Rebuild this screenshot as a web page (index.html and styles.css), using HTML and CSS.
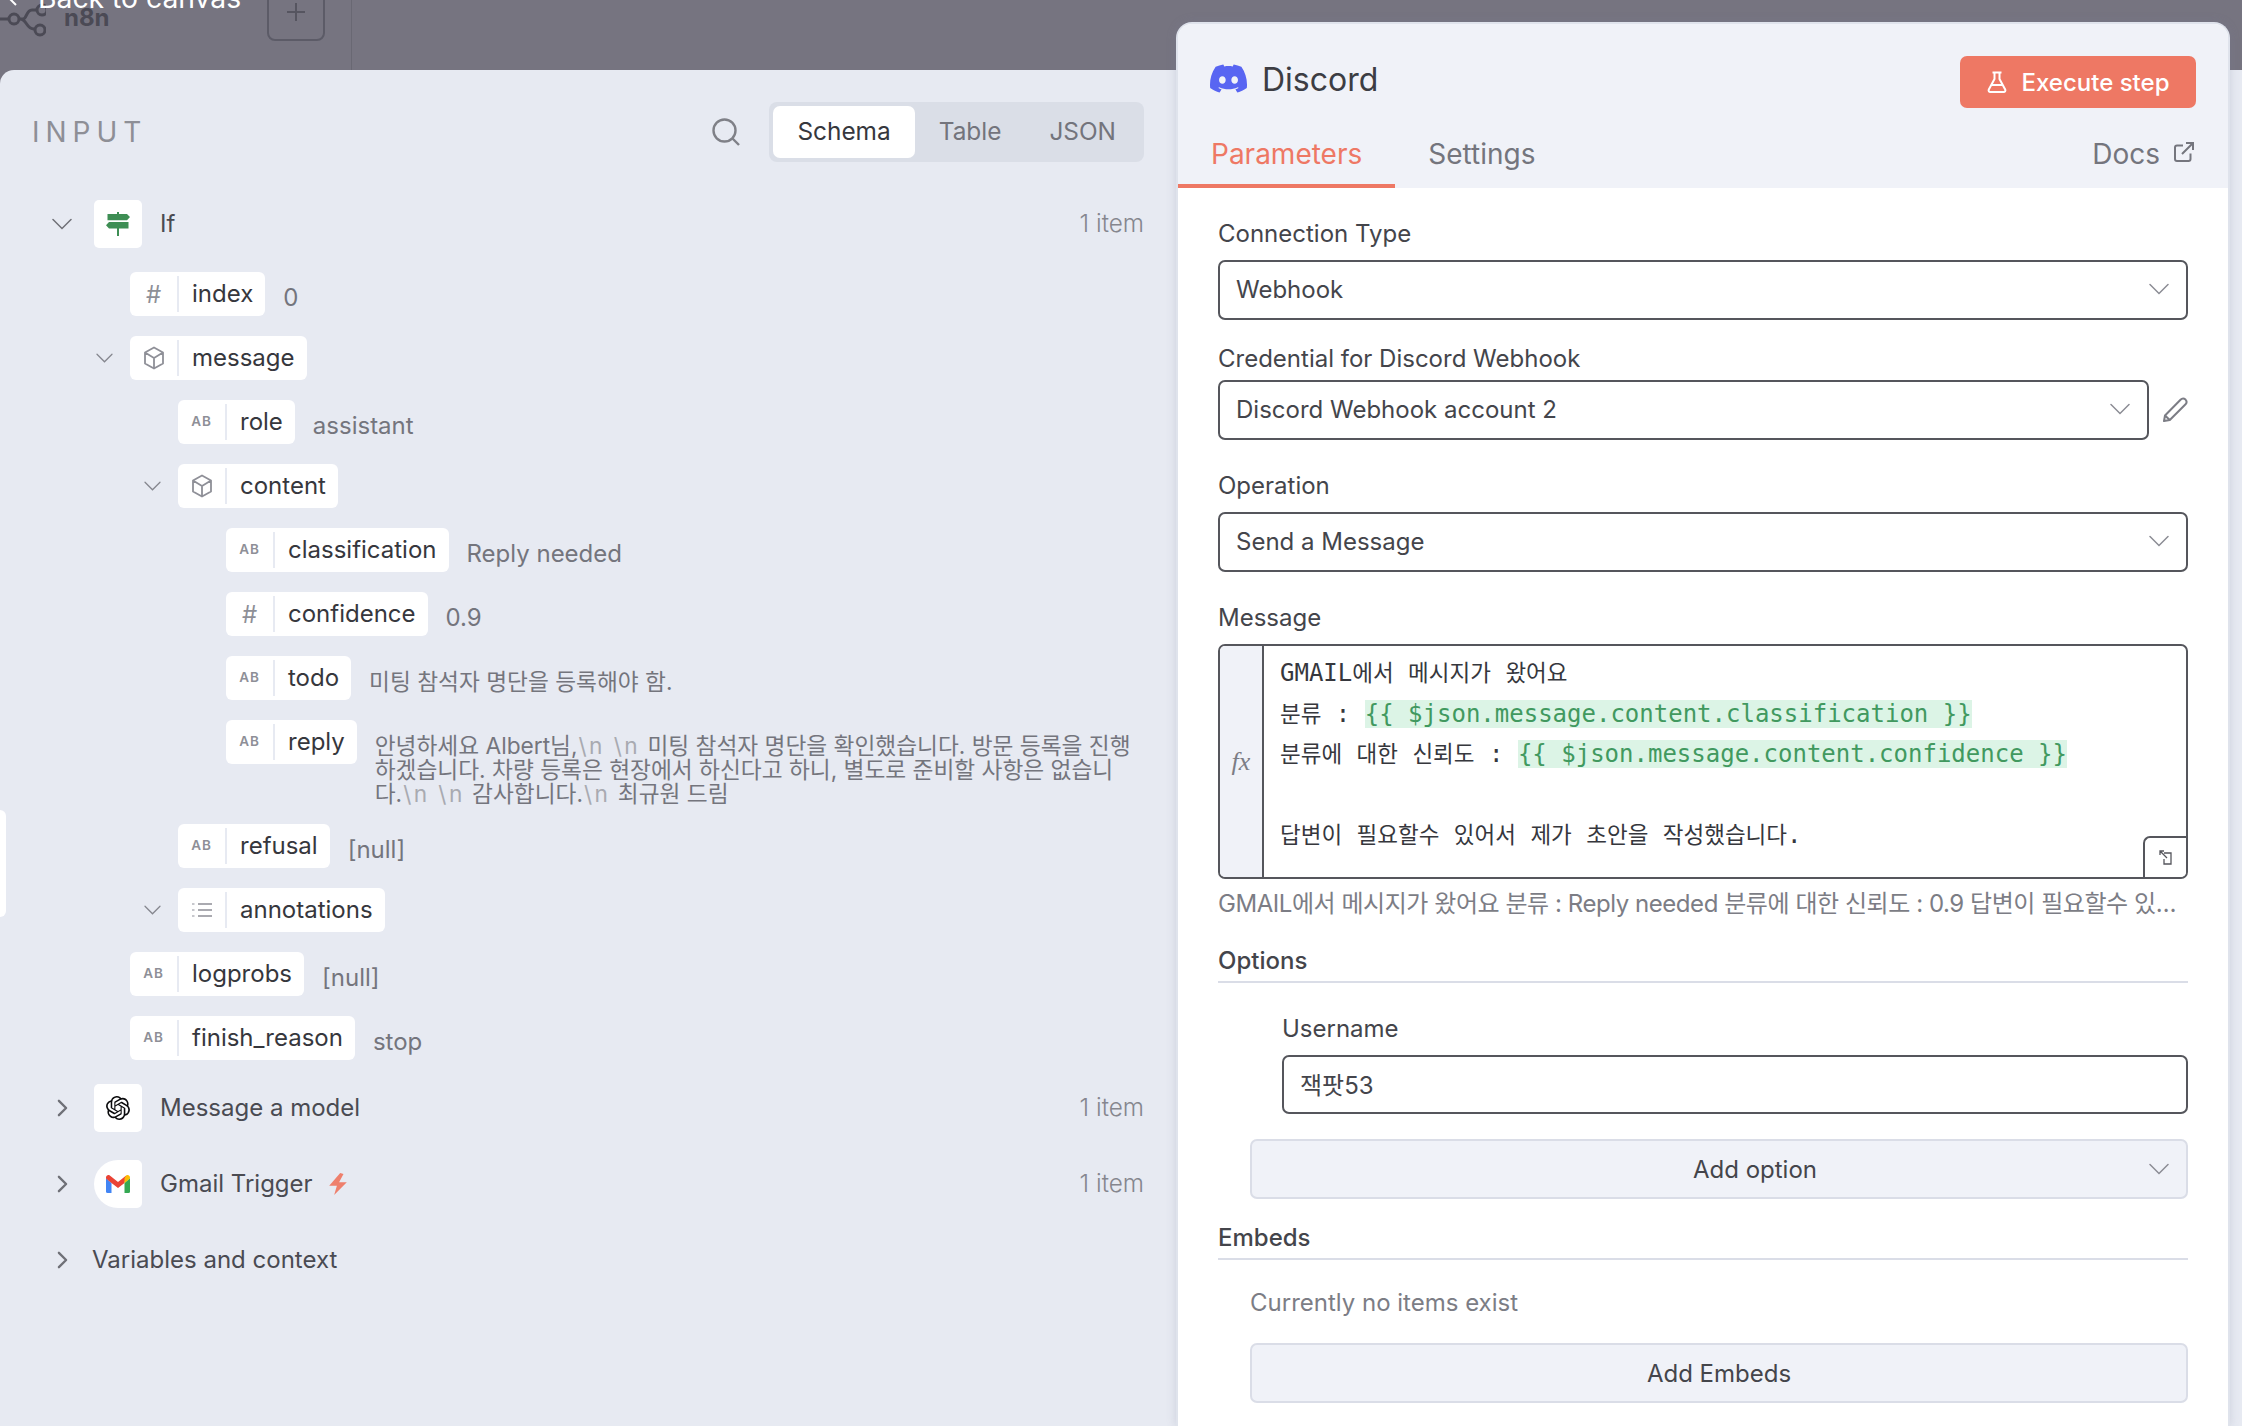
FILE: index.html
```html
<!DOCTYPE html>
<html lang="ko">
<head>
<meta charset="utf-8">
<title>Discord node</title>
<link rel="stylesheet" href="styles.css">
</head>
<body>
<svg class="defs" aria-hidden="true">
  <symbol id="down" viewBox="0 0 20 12"><path d="M1 1.5 10 10.5 19 1.5" fill="none" stroke="currentColor" stroke-width="1.5" stroke-linecap="round"/></symbol>
  <symbol id="right" viewBox="0 0 12 20"><path d="M2 2 10 10 2 18" fill="none" stroke="currentColor" stroke-width="2.6" stroke-linecap="round" stroke-linejoin="round"/></symbol>
  <symbol id="cube" viewBox="0 0 20 24"><path d="M10 1.5 19 6.5V17.5L10 22.5 1 17.5V6.5ZM1 6.5 10 12 19 6.5M10 12V22.5" fill="none" stroke="currentColor" stroke-width="1.8" stroke-linejoin="round"/></symbol>
</svg>
<div class="page">
  <header class="topbar">
    <svg class="n8n-logo" viewBox="0 0 46 40" aria-hidden="true">
      <g fill="none" stroke="#4b4a55" stroke-width="3"><path d="M-6 19H9M19 19H23C27 19 26 10 32 10H36M20 19C27 19 26 29 34 29"/><circle cx="14" cy="19" r="5"/><circle cx="40" cy="30" r="5"/><circle cx="42" cy="10" r="5"/></g>
    </svg>
    <span class="n8n-name">n8n</span>
    <span class="add-btn"><svg viewBox="0 0 18 18" class="add-ico"><path d="M9 0V18M0 9H18" stroke="#565560" stroke-width="2"/></svg></span>
    <span class="top-div"></span>
    <a class="back"><svg viewBox="0 0 10 16" class="back-ico"><path d="M8 1 1 8 8 15" fill="none" stroke="#fff" stroke-width="2"/></svg>Back to canvas</a>
  </header>

  <section class="input-panel">
    <div class="input-col">
      <div class="input-head">
        <span class="input-title">INPUT</span>
        <svg class="search" viewBox="0 0 28 28"><circle cx="12.5" cy="12.5" r="11" fill="none" stroke="#7f8087" stroke-width="2.4"/><path d="M20.5 20.5 27 27" stroke="#7f8087" stroke-width="2.4"/></svg>
        <div class="switch">
          <span class="sw on">Schema</span><span class="sw">Table</span><span class="sw">JSON</span>
        </div>
      </div>

      <div class="tree">
        <div class="node">
          <span class="node-caret"><svg class="c-down-big"><use href="#down"/></svg></span>
          <span class="node-ico">
            <svg class="sign" viewBox="0 0 24 24"><path fill="#3e8e54" d="M11 0h2v2h8l3 3-3 3.200H1.500V2H11ZM3 10h19.500v6.500H13V24h-2v-7.500H3l-3-3.200Z"/></svg>
          </span>
          <span class="node-name">If</span>
          <span class="count">1 item</span>
        </div>

        <div class="row d1"><span class="pill"><span class="pi hash">#</span><span class="pl">index</span></span><span class="val">0</span></div>
        <div class="row d1"><span class="caret"><svg class="c-down"><use href="#down"/></svg></span><span class="pill"><span class="pi"><svg class="cube"><use href="#cube"/></svg></span><span class="pl">message</span></span></div>
        <div class="row d2"><span class="pill"><span class="pi ab">AB</span><span class="pl">role</span></span><span class="val">assistant</span></div>
        <div class="row d2"><span class="caret"><svg class="c-down"><use href="#down"/></svg></span><span class="pill"><span class="pi"><svg class="cube"><use href="#cube"/></svg></span><span class="pl">content</span></span></div>
        <div class="row d3"><span class="pill"><span class="pi ab">AB</span><span class="pl">classification</span></span><span class="val">Reply needed</span></div>
        <div class="row d3"><span class="pill"><span class="pi hash">#</span><span class="pl">confidence</span></span><span class="val">0.9</span></div>
        <div class="row d3"><span class="pill"><span class="pi ab">AB</span><span class="pl">todo</span></span><span class="val ko-val">미팅 참석자 명단을 등록해야 함.</span></div>
        <div class="row d3 multi"><span class="pill"><span class="pi ab">AB</span><span class="pl">reply</span></span><span class="val ko-long">안녕하세요 Albert님,<i>\n \n</i> 미팅 참석자 명단을 확인했습니다. 방문 등록을 진행<br>하겠습니다. 차량 등록은 현장에서 하신다고 하니, 별도로 준비할 사항은 없습니<br>다.<i>\n \n</i> 감사합니다.<i>\n</i> 최규원 드림</span></div>
        <div class="row d2"><span class="pill"><span class="pi ab">AB</span><span class="pl">refusal</span></span><span class="val">[null]</span></div>
        <div class="row d2"><span class="caret"><svg class="c-down"><use href="#down"/></svg></span><span class="pill"><span class="pi"><svg class="list" viewBox="0 0 20 16"><path d="M6 2H20M6 8H20M6 14H20" stroke="#8e8f97" stroke-width="1.600"/><path d="M0 2H2.500M0 8H2.500M0 14H2.500" stroke="#b5b6bd" stroke-width="1.600"/></svg></span><span class="pl">annotations</span></span></div>
        <div class="row d1"><span class="pill"><span class="pi ab">AB</span><span class="pl">logprobs</span></span><span class="val">[null]</span></div>
        <div class="row d1"><span class="pill"><span class="pi ab">AB</span><span class="pl">finish_reason</span></span><span class="val">stop</span></div>

        <div class="node node-next">
          <span class="node-caret"><svg class="c-right"><use href="#right"/></svg></span>
          <span class="node-ico">
            <svg class="openai" viewBox="0 0 24 24"><path fill="#0b0b0d" d="M22.2819 9.8211a5.9847 5.9847 0 0 0-.5157-4.9108 6.0462 6.0462 0 0 0-6.5098-2.9A6.0651 6.0651 0 0 0 4.9807 4.1818a5.9847 5.9847 0 0 0-3.9977 2.9 6.0462 6.0462 0 0 0 .7427 7.0966 5.98 5.98 0 0 0 .511 4.9107 6.051 6.051 0 0 0 6.5146 2.9001A5.9847 5.9847 0 0 0 13.2599 24a6.0557 6.0557 0 0 0 5.7718-4.2058 5.9894 5.9894 0 0 0 3.9977-2.9001 6.0557 6.0557 0 0 0-.7475-7.0729zm-9.022 12.6081a4.4755 4.4755 0 0 1-2.8764-1.0408l.1419-.0804 4.7783-2.7582a.7948.7948 0 0 0 .3927-.6813v-6.7369l2.02 1.1686a.071.071 0 0 1 .038.052v5.5826a4.504 4.504 0 0 1-4.4945 4.4944zm-9.6607-4.1254a4.4708 4.4708 0 0 1-.5346-3.0137l.142.0852 4.783 2.7582a.7712.7712 0 0 0 .7806 0l5.8428-3.3685v2.3324a.0804.0804 0 0 1-.0332.0615L9.74 19.9502a4.4992 4.4992 0 0 1-6.1408-1.6464zM2.3408 7.8956a4.485 4.485 0 0 1 2.3655-1.9728V11.6a.7664.7664 0 0 0 .3879.6765l5.8144 3.3543-2.0201 1.1685a.0757.0757 0 0 1-.071 0l-4.8303-2.7865A4.504 4.504 0 0 1 2.3408 7.872zm16.5963 3.8558L13.1038 8.364 15.1192 7.2a.0757.0757 0 0 1 .071 0l4.8303 2.7913a4.4944 4.4944 0 0 1-.6765 8.1042v-5.6772a.79.79 0 0 0-.407-.667zm2.0107-3.0231l-.142-.0852-4.7735-2.7818a.7759.7759 0 0 0-.7854 0L9.409 9.2297V6.8974a.0662.0662 0 0 1 .0284-.0615l4.8303-2.7866a4.4992 4.4992 0 0 1 6.6802 4.66zM8.3065 12.863l-2.02-1.1638a.0804.0804 0 0 1-.038-.0567V6.0742a4.4992 4.4992 0 0 1 7.3757-3.4537l-.142.0805L8.704 5.459a.7948.7948 0 0 0-.3927.6813zm1.0976-2.3654l2.602-1.4998 2.6069 1.4998v2.9994l-2.5974 1.4997-2.6067-1.4997Z"/></svg>
          </span>
          <span class="node-name">Message a model</span>
          <span class="count">1 item</span>
        </div>
        <div class="node node-gmail">
          <span class="node-caret"><svg class="c-right"><use href="#right"/></svg></span>
          <span class="node-ico ico-gmail">
            <svg class="gmail" viewBox="0 0 24 18"><path fill="#4285f4" d="M0 3v13.500A1.500 1.500 0 0 0 1.500 18H5.500V8Z"/><path fill="#34a853" d="M24 3v13.500a1.500 1.500 0 0 1-1.500 1.500H18.500V8Z"/><path fill="#ea4335" d="M0 2.500C0 .5 2.300-.6 3.800.6L12 7 20.200.6 18.500 8 12 13 5.500 8 0 3.500Z"/><path fill="#fbbc04" d="M18.500 3.200 20.200.6C21.700-.6 24 .5 24 2.500V3.500L18.500 8Z"/></svg>
          </span>
          <span class="node-name">Gmail Trigger</span>
          <svg class="bolt" viewBox="0 0 18 20"><path fill="#ee7f6c" d="M11 0 1 11.500H8L5.500 20 17 8.500H10L14 1Z"/></svg>
          <span class="count">1 item</span>
        </div>
        <div class="node node-vars">
          <span class="node-caret"><svg class="c-right"><use href="#right"/></svg></span>
          <span class="node-name vars">Variables and context</span>
        </div>
      </div>
    </div>
    <span class="handle"></span>
  </section>

  <section class="ndv">
    <div class="ndv-head">
      <div class="title-row">
        <svg class="discord" viewBox="0 0 24 24"><path fill="#5865f2" d="M20.317 4.3698a19.7913 19.7913 0 00-4.8851-1.5152.0741.0741 0 00-.0785.0371c-.211.3753-.4447.8648-.6083 1.2495-1.8447-.2762-3.68-.2762-5.4868 0-.1636-.3933-.4058-.8742-.6177-1.2495a.077.077 0 00-.0785-.037 19.7363 19.7363 0 00-4.8852 1.515.0699.0699 0 00-.0321.0277C.5334 9.0458-.319 13.5799.0992 18.0578a.0824.0824 0 00.0312.0561c2.0528 1.5076 4.0413 2.4228 5.9929 3.0294a.0777.0777 0 00.0842-.0276c.4616-.6304.8731-1.2952 1.226-1.9942a.076.076 0 00-.0416-.1057c-.6528-.2476-1.2743-.5495-1.8722-.8923a.077.077 0 01-.0076-.1277c.1258-.0943.2517-.1923.3718-.2914a.0743.0743 0 01.0776-.0105c3.9278 1.7933 8.18 1.7933 12.0614 0a.0739.0739 0 01.0785.0095c.1202.099.246.1981.3728.2924a.077.077 0 01-.0066.1276 12.2986 12.2986 0 01-1.873.8914.0766.0766 0 00-.0407.1067c.3604.698.7719 1.3628 1.225 1.9932a.076.076 0 00.0842.0286c1.961-.6067 3.9495-1.5219 6.0023-3.0294a.077.077 0 00.0313-.0552c.5004-5.177-.8382-9.6739-3.5485-13.6604a.061.061 0 00-.0312-.0286zM8.02 15.3312c-1.1825 0-2.1569-1.0857-2.1569-2.419 0-1.3332.9555-2.4189 2.157-2.4189 1.2108 0 2.1757 1.0952 2.1568 2.419 0 1.3332-.9555 2.4189-2.1569 2.4189zm7.9748 0c-1.1825 0-2.1569-1.0857-2.1569-2.419 0-1.3332.9554-2.4189 2.1569-2.4189 1.2108 0 2.1757 1.0952 2.1568 2.419 0 1.3332-.946 2.4189-2.1568 2.4189Z"/></svg>
        <span class="title">Discord</span>
        <button class="exec"><svg class="flask" viewBox="0 0 20 22"><path d="M5.500 1.500H14.500M7.500 1.500V8L1.800 18.500C1.200 19.700 2 21 3.300 21H16.700C18 21 18.800 19.700 18.200 18.500L12.500 8V1.500M4.500 14H15.500" fill="none" stroke="#fff" stroke-width="2" stroke-linejoin="round"/></svg>Execute step</button>
      </div>
      <div class="tabs">
        <span class="tab active">Parameters</span>
        <span class="tab">Settings</span>
        <span class="docs">Docs<svg class="ext" viewBox="0 0 20 20"><path d="M9 3.500H3C1.800 3.500 1 4.300 1 5.500V17C1 18.200 1.800 19 3 19H14.500C15.700 19 16.500 18.200 16.500 17V11.500M8 12 18.500 1.500M12 1H19V8" fill="none" stroke="#75767e" stroke-width="2"/></svg></span>
      </div>
    </div>

    <div class="form">
      <div class="field">
        <label class="lbl">Connection Type</label>
        <div class="select"><span>Webhook</span><svg class="sel-chev"><use href="#down"/></svg></div>
      </div>
      <div class="field f-cred">
        <label class="lbl">Credential for Discord Webhook</label>
        <div class="cred-row">
          <div class="select"><span>Discord Webhook account 2</span><svg class="sel-chev"><use href="#down"/></svg></div>
          <svg class="pencil" viewBox="0 0 26 26"><path d="M2 24 3 18.500 18.500 2.800C20 1.300 22 1.300 23.500 2.600 24.800 4 24.800 6 23.300 7.500L7.800 23ZM3 18.500 7.800 23" fill="none" stroke="#7c7d85" stroke-width="2" stroke-linejoin="round"/></svg>
        </div>
      </div>
      <div class="field">
        <label class="lbl">Operation</label>
        <div class="select"><span>Send a Message</span><svg class="sel-chev"><use href="#down"/></svg></div>
      </div>
      <div class="field">
        <label class="lbl">Message</label>
        <div class="editor">
          <div class="fx">fx</div>
          <div class="code">
            <div class="ln">GMAIL<span class="ko">에서</span> <span class="ko">메시지가</span> <span class="ko">왔어요</span></div>
            <div class="ln"><span class="ko">분류</span> : <span class="expr">{{ $json.message.content.classification }}</span></div>
            <div class="ln"><span class="ko">분류에</span> <span class="ko">대한</span> <span class="ko">신뢰도</span> : <span class="expr">{{ $json.message.content.confidence }}</span></div>
            <div class="ln">&nbsp;</div>
            <div class="ln"><span class="ko">답변이</span> <span class="ko">필요할수</span> <span class="ko">있어서</span> <span class="ko">제가</span> <span class="ko">초안을</span> <span class="ko">작성했습니다</span>.</div>
          </div>
          <span class="resize"><svg class="resize-ico" viewBox="0 0 14 16"><path d="M1 5V1H5M1 1 8 8M5 3H12V14H5V9" fill="none" stroke="#55565c" stroke-width="1.300"/></svg></span>
        </div>
        <div class="preview">GMAIL에서 메시지가 왔어요 분류 : Reply needed 분류에 대한 신뢰도 : 0.9 답변이 필요할수 있어서 제가 초안을 작성했습니다.</div>
      </div>

      <div class="sect sect-options">Options</div>
      <div class="username">
        <label class="lbl">Username</label>
        <div class="select input"><span>잭팟53</span></div>
      </div>
      <div class="soft-btn add-option">Add option<svg class="sel-chev soft-chev"><use href="#down"/></svg></div>

      <div class="sect sect-embeds">Embeds</div>
      <div class="none">Currently no items exist</div>
      <div class="soft-btn">Add Embeds</div>
    </div>
  </section>
</div>
</body>
</html>
```
FILE: styles.css
```css
* { box-sizing: border-box; }
html, body { margin: 0; height: 100%; overflow: hidden; }
body { font-family: Inter, "Noto Sans CJK KR", sans-serif; color: #3c3d43; background: #e7eaf2; }
.defs { display: none; }

.page {
  display: grid;
  width: 2242px;
  height: 1426px;
  grid-template-columns: 1176px 1fr;
  grid-template-rows: 70px 1fr;
  background: #767480;
}

/* top bar */
.topbar {
  grid-column: 1 / 3;
  grid-row: 1;
  position: relative;
  display: flex;
  align-items: flex-start;
  height: 70px;
  overflow: hidden;
}
.n8n-logo { width: 46px; height: 40px; flex: none; }
.n8n-name { margin: 3px 0 0 18px; width: 203px; font-size: 24px; line-height: 29px; font-weight: 700; color: #4b4a55; }
.add-btn {
  display: flex; align-items: center; justify-content: center;
  width: 58px; height: 60px; margin-top: -19px;
  border: 2px solid #5c5b67; border-radius: 8px;
}
.add-ico { width: 18px; height: 18px; margin-top: 2px; }
.top-div { width: 1px; height: 70px; margin-left: 26px; background: #696873; }
.back {
  position: absolute; left: 8px; top: -20px;
  display: flex; align-items: center; gap: 20px;
  font-size: 28.300px; line-height: 36px; color: #fff;
}
.back-ico { width: 10px; height: 16px; }

/* input panel */
.input-panel {
  grid-column: 1 / 3;
  grid-row: 2;
  position: relative;
  background: #e7eaf2;
  border-top-left-radius: 14px;
}
.input-col { width: 1144px; }
.input-head {
  display: flex;
  align-items: center;
  margin: 32px 0 0 32px;
}
.input-title {
  font-size: 28px;
  font-weight: 400;
  letter-spacing: 6px;
  color: #8e8f96;
  line-height: 60px;
}
.search { width: 28px; height: 28px; margin: 0 29px 0 auto; }
.switch {
  display: flex;
  height: 60px;
  padding: 4px;
  background: #dadee7;
  border-radius: 8px;
}
.sw {
  display: flex; align-items: center;
  padding: 0 24px 2px;
  font-size: 24.400px;
  color: #73747c;
  border-radius: 7px;
}
.sw.on { background: #fff; color: #36373d; }

.tree { margin-top: 38px; }
.node {
  display: flex;
  align-items: center;
  height: 48px;
  padding-left: 41px;
  font-size: 24px;
}
.node-next { margin-top: 24px; }
.node-gmail { margin-top: 28px; }
.node-vars { margin-top: 28px; }
.node-caret {
  display: flex; align-items: center; justify-content: center;
  flex: none;
  width: 42px;
  margin-right: 11px;
  color: #6f7077;
}
.c-down-big { width: 20px; height: 12px; color: #6f7077; }
.c-right { width: 11px; height: 18px; }
.node-ico {
  display: flex; align-items: center; justify-content: center;
  flex: none;
  width: 48px; height: 48px;
  background: #fff;
  border-radius: 5px;
}
.ico-gmail { border-radius: 24px 5px 5px 24px; }
.sign { width: 24px; height: 24px; }
.openai { width: 24px; height: 24px; }
.gmail { width: 24px; height: 18px; }
.node-name { margin-left: 18px; padding-bottom: 2px; color: #4a4b52; }
.vars { margin-left: -2px; }
.bolt { width: 20px; height: 22px; margin-left: 15px; }
.count { margin-left: auto; padding-bottom: 2px; font-size: 24.300px; font-weight: 300; color: #85868e; }

.row {
  position: relative;
  display: flex;
  align-items: center;
  margin-top: 20px;
  height: 44px;
}
.node + .row { margin-top: 24px; }
.d1 { padding-left: 130px; }
.d2 { padding-left: 178px; }
.d3 { padding-left: 226px; }
.multi { height: 84px; align-items: flex-start; }
.caret {
  display: flex; align-items: center;
  width: 34px; height: 40px;
  margin-left: -34px;
  color: #85868e;
}
.c-down { width: 17px; height: 10px; }
.pill {
  display: flex;
  align-items: center;
  height: 44px;
  background: #fff;
  border-radius: 6px;
  font-size: 24px;
  color: #36373d;
  flex: none;
}
.pi {
  display: flex; align-items: center; justify-content: center;
  width: 49px; height: 36px;
  border-right: 2px solid #e7eaf2;
  color: #8e8f97;
}
.hash { font-size: 24px; font-weight: 400; }
.ab { font-size: 13.500px; font-weight: 600; letter-spacing: 1px; padding-bottom: 3px; }
.cube { width: 20px; height: 24px; }
.list { width: 20px; height: 16px; }
.pl { padding: 0 12px 1px 13px; line-height: 43px; }
.val {
  margin-left: 18px;
  padding-top: 6px;
  font-size: 24px;
  color: #74757d;
}
.ko-val { font-size: 22.700px; padding-top: 4px; }
.ko-long {
  margin-left: 18px;
  padding-top: 14px;
  font-size: 22.700px;
  line-height: 24px;
  white-space: nowrap;
}
.ko-long i { font-style: normal; color: #a9aab1; letter-spacing: 2.400px; margin: 0 1px; }
.handle {
  position: absolute;
  left: 0; top: 740px;
  width: 6px; height: 107px;
  background: #fff;
  border-radius: 0 8px 8px 0;
}

/* node detail panel */
.ndv {
  grid-column: 2;
  grid-row: 1 / 3;
  z-index: 2;
  margin: 22px 12px 0 0;
  background: #fff;
  border: 2px solid #dfe3ec;
  border-bottom: 0;
  border-radius: 16px 16px 0 0;
  box-shadow: 0 0 10px rgba(120, 125, 150, .25);
  overflow: hidden;
}
.ndv-head { height: 164px; padding-top: 32px; background: #f0f2f8; }
.title-row { display: flex; align-items: center; height: 52px; margin: 0 32px; }
.discord { width: 37px; height: 37px; margin: 0 15px 8px 0; }
.title { font-size: 32px; padding-bottom: 6px; color: #3c3d43; }
.exec {
  display: flex; align-items: center; justify-content: center; gap: 15px;
  margin-left: auto;
  width: 236px; height: 52px;
  padding: 0;
  background: #ee7864;
  border: 0;
  border-radius: 7px;
  font: 500 24px Inter, sans-serif;
  color: #fff;
}
.flask { width: 20px; height: 22px; }
.tabs { display: flex; align-items: stretch; height: 58px; margin-top: 22px; }
.tab {
  padding: 0 33px;
  font-size: 28px;
  line-height: 48px;
  color: #74757d;
}
.tab.active { color: #ee7864; border-bottom: 4px solid #ee7864; }
.docs {
  display: flex; align-items: flex-start; gap: 14px;
  margin-left: auto;
  padding-right: 34px;
  font-size: 28px;
  line-height: 48px;
  color: #74757d;
}
.ext { width: 20px; height: 20px; margin-top: 12px; }

.form { display: flex; flex-direction: column; padding: 31px 40px 0; }
.field { display: flex; flex-direction: column; margin-bottom: 31px; }
.f-cred { margin-top: -7px; }
.f-cred .lbl { margin-bottom: 6px; }
.lbl { font-size: 24px; line-height: 30px; margin-bottom: 11px; color: #44454b; }
.cred-row { display: flex; align-items: center; }
.select {
  display: flex; align-items: center; justify-content: space-between;
  flex: none;
  height: 60px;
  padding: 0 17px 2px 16px;
  border: 2px solid #55565c;
  border-radius: 7px;
  font-size: 24px;
  color: #44454b;
}
.cred-row .select { flex: 1; }
.sel-chev { width: 20px; height: 12px; color: #8b8c94; }
.pencil { width: 26px; height: 26px; margin-left: 13px; flex: none; }

.editor {
  position: relative;
  display: flex;
  height: 235px;
  border: 2px solid #55565c;
  border-radius: 7px;
  overflow: hidden;
}
.fx {
  display: flex; align-items: center; justify-content: center;
  width: 44px;
  background: #f0f2f8;
  border-right: 2px solid #55565c;
  font: italic 26px "Liberation Serif", serif;
  color: #7c7d85;
}
.code {
  padding: 5px 0 0 16px;
  font: 24px/40.500px "DejaVu Sans Mono", "Noto Sans CJK KR", monospace;
  color: #36373d;
}
.ln { height: 40.500px; white-space: pre; }
.ko { font-family: "Noto Sans CJK KR", sans-serif; font-size: 22.500px; }
.expr { background: #dcf4e6; color: #41995f; }
.resize {
  position: absolute; right: 0; bottom: 0;
  display: flex; align-items: center; justify-content: center;
  width: 43px; height: 41px;
  background: #fff;
  border-top: 2px solid #55565c;
  border-left: 2px solid #55565c;
  border-top-left-radius: 7px;
}
.resize-ico { width: 14px; height: 16px; }
.preview {
  margin-top: 10px;
  width: 960px;
  font-size: 24px;
  line-height: 30px;
  letter-spacing: -.45px;
  color: #7c7d85;
  white-space: nowrap;
  overflow: hidden;
  text-overflow: ellipsis;
}
.sect {
  padding-bottom: 5px;
  border-bottom: 2px solid #dadde7;
  font-size: 24px;
  font-weight: 500;
  line-height: 30px;
  color: #44454b;
}
.sect-options { margin-top: -4px; }
.sect-embeds { margin-top: 24px; }
.username { display: flex; flex-direction: column; margin: 31px 0 0 64px; }
.username .select { height: 59px; }
.soft-btn {
  position: relative;
  display: flex; align-items: center; justify-content: center;
  height: 60px;
  margin: 25px 0 0 32px;
  background: #f0f2f8;
  border: 2px solid #dadde7;
  border-radius: 7px;
  font-size: 24px;
  color: #44454b;
}
.add-option { padding-left: 72px; }
.soft-chev { position: absolute; right: 17px; top: 22px; }
.none { margin: 28px 0 0 32px; font-size: 24px; line-height: 30px; color: #7c7d85; }
```
